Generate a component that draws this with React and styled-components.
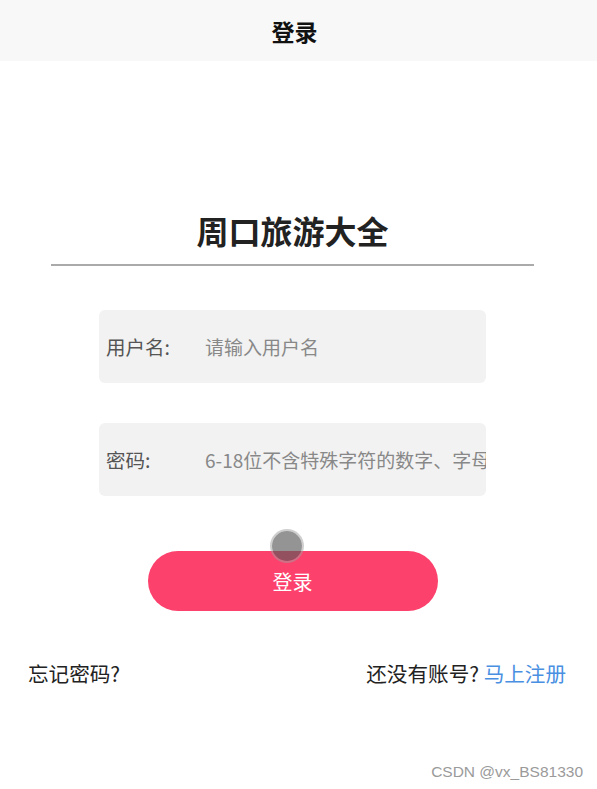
import React from "react";
import styled, { createGlobalStyle } from "styled-components";

const GlobalStyle = createGlobalStyle`
  html, body {
    margin: 0;
    padding: 0;
    background: #fff;
  }
  body {
    font-family: "Noto Sans CJK SC", "Noto Sans", sans-serif;
    color: #333;
  }
`;

const Page = styled.div`
  width: 597px;
  height: 789px;
  position: relative;
  overflow: hidden;
`;

const Header = styled.header`
  height: 61px;
  padding-right: 8px;
  background: #f8f8f8;
  display: flex;
  align-items: center;
  justify-content: center;
  font-size: 23px;
  font-weight: 700;
  color: #111;
`;

const Content = styled.main`
  width: 585px;
  display: flex;
  flex-direction: column;
  align-items: center;
`;

const Title = styled.h1`
  margin: 147px 0 0;
  font-size: 32px;
  line-height: 44px;
  font-weight: 700;
  color: #222;
`;

const Divider = styled.hr`
  align-self: stretch;
  margin: 12px 51px 0;
  border: none;
  height: 2px;
  background: #aaa;
`;

const Field = styled.label`
  width: 387px;
  height: 73px;
  margin-top: ${({ $top }) => $top}px;
  box-sizing: border-box;
  background: #f2f2f2;
  border-radius: 6px;
  display: flex;
  align-items: center;
  padding-left: 7px;
  overflow: hidden;
`;

const Label = styled.span`
  width: 99px;
  flex-shrink: 0;
  font-size: 19.5px;
  color: #555;
`;

const Input = styled.input`
  flex: 1;
  min-width: 0;
  border: none;
  outline: none;
  background: transparent;
  padding: 0;
  font-family: inherit;
  font-size: 19px;
  color: #333;
  &::placeholder {
    color: #888;
  }
`;

const ButtonWrap = styled.div`
  position: relative;
  margin-top: 55px;
`;

const LoginButton = styled.button`
  width: 290px;
  height: 60px;
  border: none;
  border-radius: 30px;
  background: #fc416c;
  color: #fff;
  font-family: inherit;
  font-size: 20px;
  cursor: pointer;
`;

const Touch = styled.span`
  position: absolute;
  left: 124px;
  top: -20px;
  width: 30px;
  height: 30px;
  border-radius: 50%;
  background: rgba(90, 90, 90, 0.65);
  box-shadow: 0 0 0 2px rgba(160, 160, 160, 0.5);
  pointer-events: none;
`;

const Footer = styled.div`
  margin-top: 47px;
  padding: 0 31px 0 28px;
  display: flex;
  justify-content: space-between;
  font-size: 20.6px;
  color: #222;
`;

const Link = styled.a`
  color: #4a90e2;
  text-decoration: none;
`;

const Watermark = styled.div`
  position: absolute;
  right: 14px;
  bottom: 8px;
  font-family: "Liberation Sans", Arial, sans-serif;
  font-size: 15.5px;
  color: #9a9a9a;
`;

export default function App() {
  return (
    <Page>
      <GlobalStyle />
      <Header>登录</Header>
      <Content>
        <Title>周口旅游大全</Title>
        <Divider />
        <Field $top={44}>
          <Label>用户名:</Label>
          <Input type="text" placeholder="请输入用户名" />
        </Field>
        <Field $top={40}>
          <Label>密码:</Label>
          <Input type="password" placeholder="6-18位不含特殊字符的数字、字母组合" />
        </Field>
        <ButtonWrap>
          <LoginButton>登录</LoginButton>
          <Touch />
        </ButtonWrap>
      </Content>
      <Footer>
        <span>忘记密码?</span>
        <span>
          还没有账号? <Link href="#">马上注册</Link>
        </span>
      </Footer>
      <Watermark>CSDN @vx_BS81330</Watermark>
    </Page>
  );
}
